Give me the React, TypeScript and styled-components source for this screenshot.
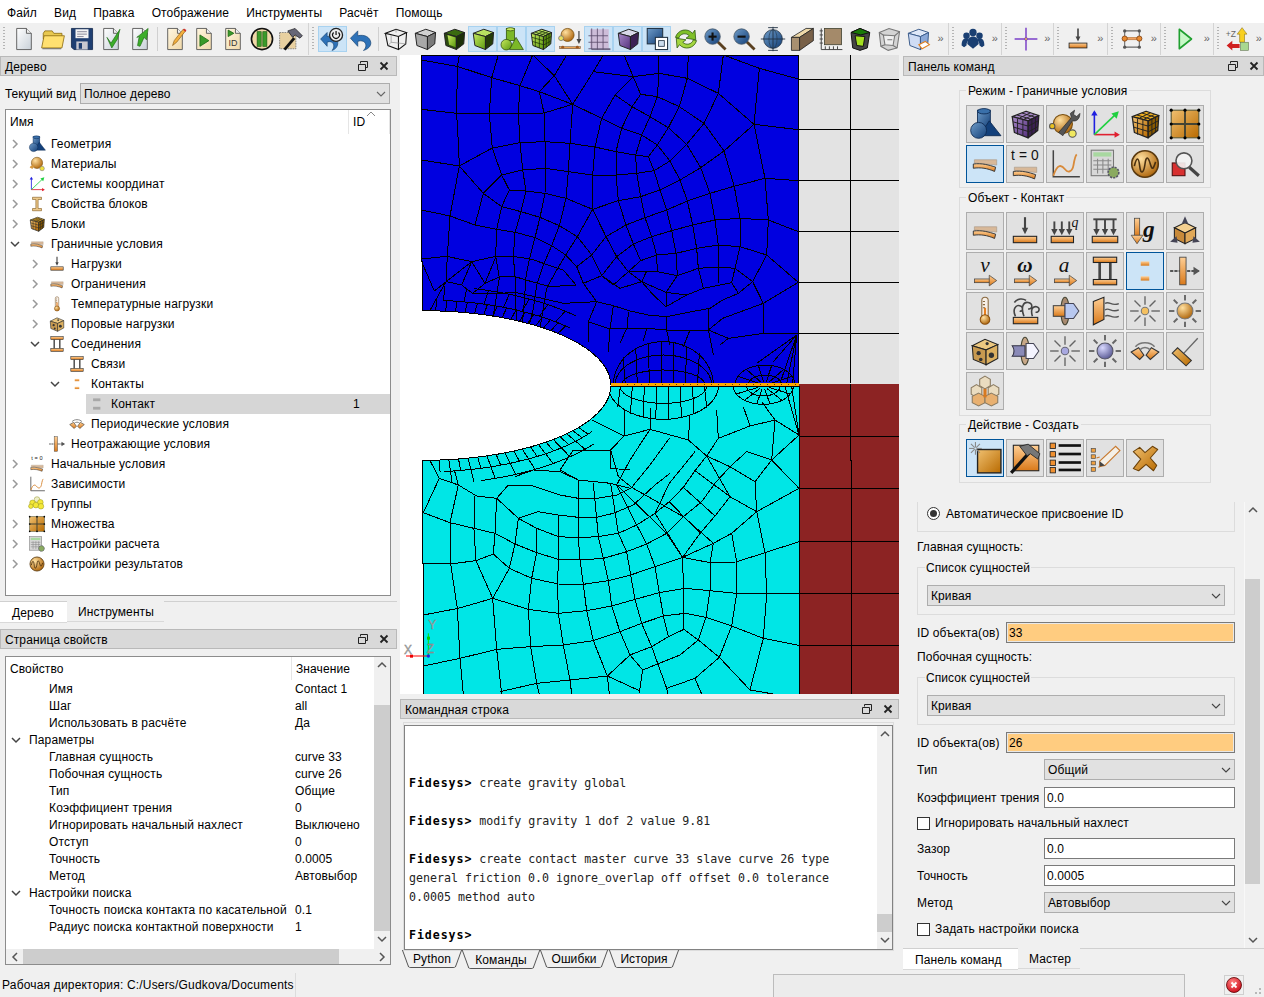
import React from 'react';
import styled, { createGlobalStyle } from 'styled-components';

const GlobalStyle = createGlobalStyle`
  html, body { margin: 0; padding: 0; }
  body { width: 1264px; height: 997px; overflow: hidden; background: #f0f0f0; color: #000;
    font: 12px/14px "Liberation Sans", Arial, sans-serif; letter-spacing: .1px; }
  * { box-sizing: border-box; }
`;

/* ---------- icon primitives ---------- */
const Defs = styled.svg`position: absolute; width: 0; height: 0;`;
const GradDefs = () => (
  <Defs>
    <defs>
      <linearGradient id="or" x1="0" y1="0" x2="0" y2="1"><stop offset="0" stopColor="#ffcf95" /><stop offset="1" stopColor="#d9791a" /></linearGradient>
      <linearGradient id="orb" x1="0" y1="0" x2="1" y2="1"><stop offset="0" stopColor="#f0c070" /><stop offset="1" stopColor="#b86a00" /></linearGradient>
      <linearGradient id="bl" x1="0" y1="0" x2="1" y2="1"><stop offset="0" stopColor="#6f9cc8" /><stop offset="1" stopColor="#133f78" /></linearGradient>
      <linearGradient id="gr" x1="0" y1="0" x2="1" y2="1"><stop offset="0" stopColor="#c8ea60" /><stop offset="1" stopColor="#5c9a10" /></linearGradient>
      <linearGradient id="pu" x1="0" y1="0" x2="1" y2="1"><stop offset="0" stopColor="#a88ac8" /><stop offset="1" stopColor="#54307c" /></linearGradient>
      <linearGradient id="doc" x1="0" y1="0" x2="1" y2="1"><stop offset="0" stopColor="#ffffff" /><stop offset="1" stopColor="#c8d0d8" /></linearGradient>
      <linearGradient id="tan" x1="0" y1="0" x2="1" y2="1"><stop offset="0" stopColor="#fff6e0" /><stop offset="1" stopColor="#f0d8a8" /></linearGradient>
      <radialGradient id="ball" cx=".35" cy=".3" r=".8"><stop offset="0" stopColor="#ffe0a0" /><stop offset="1" stopColor="#a85c00" /></radialGradient>
      <radialGradient id="ballb" cx=".35" cy=".3" r=".8"><stop offset="0" stopColor="#d8d8ff" /><stop offset="1" stopColor="#50508c" /></radialGradient>
      <radialGradient id="red" cx=".4" cy=".3" r=".8"><stop offset="0" stopColor="#ff8080" /><stop offset="1" stopColor="#c80010" /></radialGradient>
    </defs>
  </Defs>
);

const Cube = ({ t, l, r, s = '#222', grid, g = '#222' }: { t: string; l: string; r: string; s?: string; grid?: boolean; g?: string }) => (
  <g stroke={s} strokeWidth="1.2" strokeLinejoin="round">
    <polygon points="4,9 17,4 29,8 19,13" fill={t} />
    <polygon points="4,9 19,13 19,29 6,24" fill={l} />
    <polygon points="19,13 29,8 28,22 19,29" fill={r} />
    {grid && (
      <g stroke={g} strokeWidth=".9" fill="none">
        <path d="M9 11v15M14 12v15M5 14l14 4M5.500 19l13.500 4M22.500 11v15.500M25.800 9.500v14.500M19 18l9.500-5M19 23.500l9-5" />
        <path d="M8.500 7.500l14 4.300M13 5.600l13 4.200M21 5.500L11 10.300M25 7L15 11.500" />
      </g>
    )}
  </g>
);
const Doc = ({ fill = 'url(#doc)' }: { fill?: string }) => (
  <g stroke="#555" strokeWidth="1.1">
    <path d="M7 3h12l6 6v20H7z" fill={fill} />
    <path d="M19 3v6h6" fill="#eee" />
  </g>
);
const Slab = ({ dy = 0, dx = 0 }: { dy?: number; dx?: number }) => (
  <g transform={`translate(${dx},${dy})`}>
    <polygon points="6,12 27,12 27,17 6,15" fill="#d8b898" stroke="#a89888" strokeWidth=".6" />
    <path d="M5 16c8-1 15 1 21 3l-1 4c-7-3-13-4-20-3z" fill="url(#or)" stroke="#333" strokeWidth=".9" />
  </g>
);
const Plate = ({ y = 22, x = 7, w = 18, h = 5 }: { y?: number; x?: number; w?: number; h?: number }) => (
  <rect x={x} y={y} width={w} height={h} fill="url(#or)" stroke="#222" strokeWidth="1" />
);
const Down = ({ x = 16, y0 = 5, y1 = 21, w = 1.8, c = '#444' }: { x?: number; y0?: number; y1?: number; w?: number; c?: string }) => (
  <g>
    <line x1={x} y1={y0} x2={x} y2={y1 - 4} stroke={c} strokeWidth={w} />
    <polygon points={`${x - 3},${y1 - 6} ${x + 3},${y1 - 6} ${x},${y1}`} fill={c} />
  </g>
);
const RightArrow = ({ y = 25 }: { y?: number }) => (
  <g>
    <rect x="6" y={y - 1.5} width="15" height="3.500" fill="url(#or)" stroke="#444" strokeWidth=".7" />
    <polygon points={`20,${y - 5} 27,${y} 20,${y + 5}`} fill="url(#or)" stroke="#444" strokeWidth=".7" />
  </g>
);
const Rays = ({ cx = 16, cy = 16, r0 = 8, r1 = 14, c = '#666', n = 8, w = 1.3 }: { cx?: number; cy?: number; r0?: number; r1?: number; c?: string; n?: number; w?: number }) => (
  <g stroke={c} strokeWidth={w}>
    {Array.from({ length: n }).map((_, i) => {
      const a = (i * 2 * Math.PI) / n;
      return <line key={i} x1={cx + r0 * Math.cos(a)} y1={cy + r0 * Math.sin(a)} x2={cx + r1 * Math.cos(a)} y2={cy + r1 * Math.sin(a)} />;
    })}
  </g>
);
const Italic = styled.text<{ $size?: number; $bold?: boolean }>`
  font: italic ${p => (p.$bold === false ? 'normal' : 'bold')} ${p => p.$size ?? 13}px "Liberation Serif", serif; letter-spacing: 0;
`;
const Mag = ({ cx = 13, cy = 13, sign = '+' }: { cx?: number; cy?: number; sign?: string }) => (
  <g>
    <line x1={cx + 6} y1={cy + 6} x2="29" y2="29" stroke="#5a4020" strokeWidth="3.500" />
    <circle cx={cx} cy={cy} r="9.500" fill="url(#bl)" stroke="#456" strokeWidth="1" />
    <rect x={cx - 5} y={cy - 1.2} width="10" height="2.600" fill="#111" />
    {sign === '+' && <rect x={cx - 1.300} y={cy - 5} width="2.600" height="10" fill="#111" />}
  </g>
);

const icons: Record<string, React.ReactNode> = {
  newDoc: <Doc />,
  folder: (
    <g stroke="#8a6a10" strokeWidth="1">
      <path d="M4 9l2-3h9l2 3h10v7H4z" fill="#e8c850" />
      <path d="M2 27l3-15h25l-3 15z" fill="#ffe070" />
      <path d="M3 28h23" stroke="#555" />
    </g>
  ),
  save: (
    <g>
      <path d="M3 3h26v26H6l-3-3z" fill="#1f3f72" stroke="#12284c" />
      <rect x="8" y="4" width="16" height="11" fill="#f4f4f4" />
      <path d="M10 7h12M10 10h12M10 13h8" stroke="#889" strokeWidth="1.200" />
      <rect x="9" y="19" width="14" height="10" fill="#c8c8d0" />
      <rect x="12" y="21" width="4" height="7" fill="#1f3f72" />
    </g>
  ),
  docCheck: (
    <g>
      <Doc />
      <path d="M11 14l5 7 11-17-3 12-7 11z" fill="#3cae2a" stroke="#1c6a12" strokeWidth=".8" />
    </g>
  ),
  docArrow: (
    <g>
      <Doc />
      <path d="M13 24l2-11-3 1 14-11-2 14-3-3-5 11z" fill="#3cae2a" stroke="#1c6a12" strokeWidth=".8" />
    </g>
  ),
  note: (
    <g>
      <Doc fill="url(#tan)" />
      <path d="M13 24l2-6L26 4l3 2-11 14z" fill="#f4b040" stroke="#8a5a10" strokeWidth=".8" />
      <path d="M27 3l3 2-1 2-3-2z" fill="#d03030" />
    </g>
  ),
  docPlay: (
    <g>
      <Doc fill="url(#tan)" />
      <polygon points="11,11 22,18 11,25" fill="#3a9a2a" stroke="#1c6a12" />
    </g>
  ),
  docId: (
    <g>
      <Doc fill="url(#tan)" />
      <polygon points="10,5 17,9 10,13" fill="#3a9a2a" stroke="#1c6a12" />
      <text x="16" y="25" textAnchor="middle" fontSize="11" fontFamily="Liberation Sans" fill="#333">ID</text>
    </g>
  ),
  pauseCircle: (
    <g>
      <circle cx="16" cy="16" r="13" fill="#f0d8a8" stroke="#111" strokeWidth="2" />
      <rect x="10" y="7" width="5" height="18" fill="#3a9a2a" stroke="#1a5a10" strokeWidth=".8" />
      <rect x="17" y="7" width="5" height="18" fill="#3a9a2a" stroke="#1a5a10" strokeWidth=".8" />
    </g>
  ),
  hammerDoc: (
    <g>
      <path d="M2 8h20v20H2z" fill="#e8d0a0" stroke="#777" strokeDasharray="2 1" />
      <path d="M8 29l12-14" stroke="#111" strokeWidth="3.500" />
      <path d="M12 6l9-3 9 9-3 3-6-4-3 3z" fill="#667" stroke="#111" strokeWidth=".8" />
    </g>
  ),
  powerUndo: (
    <g>
      <path d="M2 16L10 8v5c7-2 12 0 13 7 .7 5-3 9-7 10 3-3 3-8 0-10-2-1-4-1-6 0v5z" fill="#2e72b8" stroke="#13406e" strokeWidth=".8" />
      <circle cx="21" cy="11" r="8" fill="#ececec" stroke="#222" strokeWidth="1.600" />
      <path d="M21 6v5M18 8a4.200 4.200 0 1 0 6 0" fill="none" stroke="#111" strokeWidth="1.500" />
    </g>
  ),
  undo: <path d="M3 15L12 6v6c9-2 15 2 16 8 .7 5-4 9-9 10 4-3 4-9 0-11-2-1-5-1-7 0v6z" fill="#2e72b8" stroke="#13406e" strokeWidth=".8" />,
  cubeWire: (
    <g fill="none" stroke="#111" strokeWidth="1.300">
      <path d="M3 9l13-5 13 4-10 5zM3 9l3 15 13 5V13M29 8l-1 14-9 7" />
      <path d="M16 4v4M10 20l-4 4M10 20l18 2M10 11v9" stroke="#888" strokeWidth=".8" />
    </g>
  ),
  cubeGray: <Cube t="#d0d0d0" l="#a8a8a8" r="#7a7a7a" />,
  cubeGreen: (
    <g>
      <Cube t="#3a6a10" l="#2c4a10" r="#1c3008" />
      <polygon points="8,11 18,14 18,26 10,23" fill="url(#gr)" />
    </g>
  ),
  cubeGreen2: <Cube t="#b8e060" l="url(#gr)" r="#243c08" />,
  shapesGreen: (
    <g stroke="#2c4a08" strokeWidth=".9">
      <rect x="9" y="3" width="10" height="15" fill="#7cb828" />
      <ellipse cx="14" cy="4" rx="5" ry="2" fill="#c8ea60" />
      <circle cx="9" cy="23" r="6.500" fill="url(#gr)" />
      <polygon points="21,14 30,29 13,29" fill="#7cb828" />
    </g>
  ),
  meshGreen: <Cube t="#b8e060" l="url(#gr)" r="#5a8a10" grid g="#1a3008" />,
  material: (
    <g>
      <circle cx="13" cy="11" r="8" fill="url(#ball)" stroke="#7a5010" />
      <circle cx="5" cy="15" r="3" fill="#e8e060" stroke="#777" />
      <Down x={27} y0={6} y1={22} w={1.5} />
      <rect x="3" y="25" width="26" height="3" fill="url(#or)" stroke="#555" strokeWidth=".6" />
      <circle cx="7" cy="26" r="1.800" fill="#a05a20" />
      <circle cx="25" cy="26" r="1.800" fill="#a05a20" />
    </g>
  ),
  gridPurple: (
    <g stroke="#5a4a6a" strokeWidth="1" fill="none">
      <rect x="5" y="4" width="23" height="24" fill="#cdbcd8" stroke="none" />
      <path d="M7 3v26h23M14 3v26M21 3v26M3 12h24M3 20h24M3 28h27" />
    </g>
  ),
  cubePurple: <Cube t="#d8d8e8" l="url(#pu)" r="#3c2054" />,
  overlap: (
    <g stroke="#234" strokeWidth="1.300">
      <rect x="4" y="3" width="19" height="19" fill="url(#bl)" />
      <rect x="14" y="14" width="15" height="15" fill="#fff" />
      <rect x="18" y="18" width="7" height="7" fill="#cde" strokeWidth="1" />
    </g>
  ),
  refresh: (
    <g stroke="#245008" strokeWidth=".9">
      <path d="M3 14C6 4 18 2 24 9l3-4 1 12-12-2 4-3c-4-4-11-3-13 3z" fill="#7fc028" />
      <path d="M29 18c-3 10-15 12-21 5l-3 4-1-12 12 2-4 3c4 4 11 3 13-3z" fill="#a4d640" />
    </g>
  ),
  zoomIn: <Mag />,
  zoomOut: <Mag sign="-" />,
  globe: (
    <g>
      <circle cx="16" cy="16" r="11.500" fill="url(#bl)" stroke="#234" />
      <path d="M1 16h30M16 1v30M10 2h12M10 30h12" stroke="#234" strokeWidth="1.100" />
      <ellipse cx="16" cy="16" rx="5" ry="11.500" fill="none" stroke="#234" strokeWidth=".7" />
    </g>
  ),
  boxBrown: (
    <g stroke="#222" strokeWidth="1">
      <polygon points="3,14 21,3 30,3 13,14" fill="#eed8a8" />
      <polygon points="3,14 13,14 13,30 3,30" fill="#a89070" />
      <polygon points="13,14 30,3 30,18 13,30" fill="#786048" />
    </g>
  ),
  ruler: (
    <g>
      <rect x="8" y="3" width="21" height="20" fill="#a48a6a" stroke="#443" />
      <path d="M4 3v26h26M2 6h4M2 11h4M2 16h4M2 21h4M9 29v-4M14 29v-4M19 29v-4M24 29v-4" stroke="#444" strokeWidth="1.200" fill="none" />
    </g>
  ),
  boxGreen: (
    <g stroke="#111" strokeWidth="1.200">
      <polygon points="5,8 16,3 28,8 25,27 16,30 7,27" fill="#444" />
      <polygon points="5,8 16,3 28,8 17,11" fill="#1a7a08" />
      <polygon points="10,12 22,13 20,25 12,24" fill="#a4e020" />
    </g>
  ),
  boxGray: (
    <g stroke="#777" strokeWidth="1.300" fill="#d4d4d4">
      <polygon points="4,8 16,3 29,7 26,27 15,30 6,25" />
      <polygon points="9,11 23,12 21,24 11,23" fill="#efefef" />
      <path d="M11 23l-5 2M21 24l5 3M9 11L4 8M23 12l6-5M14 17h6" fill="none" />
    </g>
  ),
  cubeBlue: (
    <g>
      <Cube t="#dfe8f8" l="#cfdcf4" r="#8aa8d8" s="#3a5a8a" />
      <path d="M17 23l8-4 5 4-9 5z" fill="#fff" stroke="#e08020" strokeWidth="1.300" />
    </g>
  ),
  group: (
    <g fill="#1a3f72">
      <circle cx="16" cy="8" r="4.500" />
      <circle cx="8" cy="12" r="4" />
      <circle cx="24" cy="12" r="4" />
      <path d="M9 22c0-6 3-9 7-9s7 3 7 9l-7 6z" />
      <path d="M2 24c0-6 2-9 6-9 1 0 2 0 3 1-1 2-3 4-3 8l-3 2zM30 24c0-6-2-9-6-9-1 0-2 0-3 1 1 2 3 4 3 8l3 2z" />
    </g>
  ),
  cross: (
    <g>
      <path d="M16 2v28M2 16h28" stroke="#7a3fc8" strokeWidth="1.800" />
      <circle cx="16" cy="16" r="1.800" fill="#f0c040" stroke="#7a3fc8" />
    </g>
  ),
  arrowPlate: (
    <g>
      <Down y0={3} y1={19} w={2} />
      <Plate y={21} x={5} w={22} h={6} />
    </g>
  ),
  nodes: (
    <g>
      <path d="M7 6h18v20H7z" fill="none" stroke="#666" strokeWidth="1.300" />
      <rect x="7" y="14" width="18" height="3" fill="#f0a060" stroke="#a06020" strokeWidth=".6" />
      <circle cx="7" cy="15.500" r="3.200" fill="#e88a30" stroke="#804010" />
      <circle cx="25" cy="15.500" r="3.200" fill="#e88a30" stroke="#804010" />
      <circle cx="7" cy="6" r="2" fill="#555" />
      <circle cx="25" cy="6" r="2" fill="#555" />
      <circle cx="7" cy="26" r="2" fill="#555" />
      <circle cx="25" cy="26" r="2" fill="#555" />
    </g>
  ),
  playGreen: <polygon points="9,4 24,16 9,28" fill="#c8f8c8" stroke="#20a030" strokeWidth="2" strokeLinejoin="round" />,
  axesZ: (
    <g>
      <text x="1" y="14" fontSize="10.500" fontFamily="Liberation Sans" fill="#666">+Z</text>
      <polygon points="21,2 27,10 24,10 24,20 18,20 18,10 15,10" fill="#f8d020" stroke="#8a7010" strokeWidth=".7" />
      <polygon points="2,24 9,18 9,22 18,22 18,27 9,27 9,30" fill="#d02020" />
      <rect x="19" y="20" width="10" height="10" fill="#a8d890" stroke="#607050" strokeWidth=".7" />
    </g>
  ),
  /* panel and tree icons */
  geometry: (
    <g stroke="#0c2850" strokeWidth=".8">
      <rect x="9" y="3" width="12" height="17" fill="url(#bl)" />
      <ellipse cx="15" cy="4" rx="6" ry="2.500" fill="#3a70aa" />
      <polygon points="20,13 31,27 11,27" fill="#13407a" />
      <circle cx="10" cy="22" r="7.500" fill="url(#bl)" />
    </g>
  ),
  meshPurple: <Cube t="#a88ac8" l="url(#pu)" r="#3c2054" grid />,
  materialWrench: (
    <g>
      <circle cx="14" cy="16" r="9" fill="url(#ball)" stroke="#7a5010" />
      <circle cx="4" cy="18" r="2.500" fill="#e8c020" stroke="#555" />
      <circle cx="23" cy="25" r="3.500" fill="#f0e860" stroke="#555" />
      <path d="M10 24L22 10l-1-4 4-3-1 4 3 2 3-3c0 5-3 8-7 7L14 27z" fill="#555" stroke="#222" strokeWidth=".6" />
    </g>
  ),
  coords: (
    <g fill="none" strokeWidth="1.500">
      <path d="M6 26V5" stroke="#2020e0" /><path d="M3 8l3-5 3 5z" fill="#2020e0" stroke="none" />
      <path d="M6 26h22" stroke="#e02030" /><path d="M25 23l5 3-5 3z" fill="#e02030" stroke="none" />
      <path d="M6 26L26 7" stroke="#20d040" /><path d="M22 6l7-2-2 7z" fill="#20d040" stroke="none" />
    </g>
  ),
  block: <Cube t="#f0b020" l="url(#orb)" r="#8a5a00" grid />,
  setGrid: (
    <g>
      <rect x="3" y="3" width="26" height="26" fill="url(#orb)" stroke="#553" />
      <path d="M16 3v26M3 16h26" stroke="#443" strokeWidth="1.800" />
      <circle cx="3" cy="3" r="1.500" /><circle cx="29" cy="3" r="1.500" /><circle cx="3" cy="29" r="1.500" /><circle cx="29" cy="29" r="1.500" />
      <circle cx="3" cy="16" r="1.500" /><circle cx="29" cy="16" r="1.500" /><circle cx="16" cy="3" r="1.500" /><circle cx="16" cy="29" r="1.500" />
    </g>
  ),
  slab: <Slab />,
  tZero: (
    <g>
      <text x="16" y="12" textAnchor="middle" fontSize="13" fontFamily="Liberation Sans" fill="#111">t = 0</text>
      <Slab dy={7} />
    </g>
  ),
  chart: (
    <g fill="none">
      <path d="M5 3v25h25" stroke="#444" strokeWidth="1.400" />
      <path d="M5 27c4-12 8-10 11-6s7 2 8-4 2-9 3-10" stroke="#d88a3a" strokeWidth="1.700" />
    </g>
  ),
  calc: (
    <g>
      <rect x="3" y="3" width="21" height="24" fill="#d8d8d8" stroke="#777" />
      <rect x="5" y="5" width="17" height="4" fill="#a8d8a0" />
      <path d="M5 13h17M5 17h17M5 21h17M9 11v14M14 11v14M19 11v14" stroke="#888" />
      <circle cx="24" cy="24" r="5" fill="#8aaa60" stroke="#556" strokeDasharray="2 1" strokeWidth="1.500" />
    </g>
  ),
  wave: (
    <g>
      <circle cx="16" cy="16" r="12.500" fill="url(#ball)" stroke="#5a3a10" strokeWidth="1.500" />
      <path d="M6 18c2-9 4-9 5 0s4 6 5-2 3-7 5 0 3 4 5-2" fill="none" stroke="#4a3010" strokeWidth="1.500" />
    </g>
  ),
  search: (
    <g>
      <rect x="4" y="15" width="12" height="12" fill="#d83030" stroke="#501010" />
      <line x1="20" y1="19" x2="29" y2="27" stroke="#444" strokeWidth="3" />
      <circle cx="15" cy="13" r="7.500" fill="#f4f4f4" fillOpacity=".9" stroke="#555" strokeWidth="1.500" />
    </g>
  ),
  arrows3q: (
    <g>
      <Down x={6} y0={7} y1={20} /><Down x={13} y0={7} y1={20} /><Down x={20} y0={7} y1={20} />
      <Plate y={21} x={3} w={21} h={6} />
      <Italic x="22" y="12" $size={13} $bold={false} fill="#111">q</Italic>
    </g>
  ),
  press: (
    <g>
      <path d="M5 5h22" stroke="#444" strokeWidth="1.800" />
      <Down x={8} y0={5} y1={20} /><Down x={16} y0={5} y1={20} /><Down x={24} y0={5} y1={20} />
      <Plate y={21} x={4} w={24} h={6} />
    </g>
  ),
  gravity: (
    <g>
      <rect x="6" y="4" width="5" height="17" fill="url(#or)" stroke="#444" strokeWidth=".7" />
      <polygon points="3,20 14,20 8.500,28" fill="url(#or)" stroke="#444" strokeWidth=".7" />
      <Italic x="14" y="22" $size={22} fill="#111">g</Italic>
    </g>
  ),
  cubeForces: (
    <g>
      <polygon points="16,8 26,13 16,18 6,13" fill="#f4d090" stroke="#222" />
      <polygon points="6,13 16,18 16,28 6,23" fill="#c88a3a" stroke="#222" />
      <polygon points="26,13 16,18 16,28 26,23" fill="#e0a858" stroke="#222" />
      <polygon points="16,2 19,9 13,9" fill="#445" />
      <polygon points="2,26 8,21 9,27" fill="#445" />
      <polygon points="30,26 24,21 23,27" fill="#445" />
    </g>
  ),
  velocity: (<g><Italic x="16" y="17" textAnchor="middle" $size={20} $bold={false} fill="#111">ν</Italic><RightArrow /></g>),
  omega: (<g><Italic x="16" y="17" textAnchor="middle" $size={20} fill="#111">ω</Italic><RightArrow /></g>),
  accel: (<g><Italic x="15" y="17" textAnchor="middle" $size={20} $bold={false} fill="#111">a</Italic><RightArrow /></g>),
  column: (
    <g>
      <path d="M11 8v16M21 8v16" stroke="#444" strokeWidth="2.500" />
      <Plate y={3} x={5} w={22} h={5} /><Plate y={24} x={5} w={22} h={5} />
    </g>
  ),
  contact: (
    <g>
      <rect x="12" y="7" width="8" height="4" fill="url(#or)" />
      <rect x="12" y="21" width="8" height="4" fill="url(#or)" />
    </g>
  ),
  contactGray: (
    <g>
      <rect x="9" y="6" width="13" height="5" fill="#a8a8a8" />
      <rect x="9" y="21" width="13" height="5" fill="#a8a8a8" />
    </g>
  ),
  nonreflect: (
    <g>
      <path d="M2 16h28" stroke="#555" strokeWidth="1.800" strokeDasharray="3 1" />
      <polygon points="24,12 30,16 24,20" fill="#555" />
      <rect x="11" y="3" width="6" height="26" fill="url(#or)" stroke="#444" strokeWidth=".8" />
    </g>
  ),
  thermo: (
    <g>
      <rect x="13" y="3" width="6" height="20" rx="3" fill="#f8f0e8" stroke="#8a6a40" />
      <rect x="15" y="13" width="2" height="10" fill="#e88020" />
      <path d="M14 7h2M14 10h2M14 13h2" stroke="#8a6a40" />
      <circle cx="16" cy="24" r="4.500" fill="url(#ball)" stroke="#8a5010" />
    </g>
  ),
  swirl: (
    <g>
      <Plate y={22} x={5} w={23} h={6} />
      <path d="M7 21c-3-6 0-11 4-10s3 6 0 5M15 21c-3-8-1-14 4-13s4 7 0 6M23 21c-2-6 0-10 4-9s2 6-1 5M6 8c3-4 8-4 11-2" fill="none" stroke="#444" strokeWidth="1.500" />
    </g>
  ),
  heatArrow: (
    <g>
      <ellipse cx="16" cy="16" rx="4" ry="13" fill="#a88a70" stroke="#443" />
      <rect x="5" y="11" width="11" height="10" fill="url(#or)" stroke="#444" />
      <polygon points="16,9 24,9 29,16 24,23 16,23" fill="#b8c8f0" stroke="#445" />
    </g>
  ),
  wall: (
    <g>
      <polygon points="5,7 15,3 15,24 5,29" fill="url(#or)" stroke="#222" />
      <path d="M16 9c4-3 6 3 13 0M16 15c4-3 6 3 13 0M16 21c4-3 6 3 13 0" fill="none" stroke="#555" strokeWidth="1.300" />
    </g>
  ),
  starOr: (<g><Rays r0={6} /><circle cx="16" cy="16" r="3.500" fill="#f4c060" stroke="#777" /></g>),
  sunOr: (<g><Rays r0={10} r1={15} w={1.800} /><circle cx="16" cy="16" r="7.500" fill="url(#ball)" stroke="#777" /></g>),
  porous: (
    <g>
      <polygon points="4,11 16,5 28,10 17,15" fill="#ecc880" stroke="#222" />
      <polygon points="4,11 17,15 17,29 5,24" fill="#c89a50" stroke="#222" />
      <polygon points="28,10 17,15 17,29 28,23" fill="#dcb060" stroke="#222" />
      <circle cx="10" cy="18" r="2" fill="#333" /><circle cx="22" cy="20" r="2.500" fill="#333" /><circle cx="12" cy="24" r="1.700" fill="#333" /><circle cx="18" cy="9" r="1.500" fill="#333" />
    </g>
  ),
  flowArrow: (
    <g>
      <ellipse cx="16" cy="16" rx="4" ry="13" fill="#c8a888" stroke="#443" />
      <path d="M4 11h12v10H4c2-3 2-7 0-10z" fill="#8a8ab8" stroke="#334" />
      <polygon points="17,9 24,9 29,16 24,23 17,23" fill="#f4f4ff" stroke="#445" />
    </g>
  ),
  starBl: (<g><Rays r0={6} /><circle cx="16" cy="16" r="3.500" fill="#a8a8e0" stroke="#667" /></g>),
  sunBl: (<g><Rays r0={10} r1={15} w={1.800} /><circle cx="16" cy="16" r="7.500" fill="url(#ballb)" stroke="#556" /></g>),
  periodic: (
    <g>
      <polygon points="3,17 10,13 15,20 11,24" fill="url(#or)" stroke="#333" />
      <polygon points="29,17 22,13 17,20 21,24" fill="url(#or)" stroke="#333" />
      <path d="M7 12c4-5 14-5 18 0M11 15c3-3 7-3 10 0" fill="none" stroke="#777" strokeWidth="1.500" />
    </g>
  ),
  broom: (
    <g>
      <line x1="15" y1="18" x2="28" y2="4" stroke="#666" strokeWidth="1.300" />
      <polygon points="4,18 9,13 22,25 17,30" fill="url(#orb)" stroke="#333" />
    </g>
  ),
  cubes: (
    <g stroke="#8a7a60" strokeWidth="1" fill="#eadcc0">
      <polygon points="16,2 21,5 21,11 16,14 11,11 11,5" />
      <polygon points="8,10 13,13 13,19 8,22 3,19 3,13" />
      <polygon points="24,10 29,13 29,19 24,22 19,19 19,13" />
      <polygon points="10,18 16,21 16,27 10,30 4,27 4,21" fill="#e8b070" />
      <polygon points="22,18 28,21 28,27 22,30 16,27 16,21" fill="#e8b070" />
      <rect x="14.500" y="14" width="3" height="8" fill="#d87a20" stroke="none" />
    </g>
  ),
  create: (
    <g>
      <rect x="9" y="8" width="22" height="22" fill="url(#orb)" stroke="#222" strokeWidth="1.300" />
      <Rays cx={7} cy={7} r0={1} r1={6} c="#888" w={1} />
    </g>
  ),
  hammer: (
    <g>
      <rect x="5" y="4" width="24" height="24" fill="url(#or)" stroke="#222" />
      <path d="M3 30l17-19" stroke="#111" strokeWidth="3" />
      <path d="M11 5l8-2 11 9-2 5-7-5-3 2z" fill="#777" stroke="#222" strokeWidth=".8" />
    </g>
  ),
  list: (
    <g>
      {[4, 12, 20, 27].map(y => (
        <React.Fragment key={y}>
          <rect x="2" y={y - 2} width="5" height="5" fill="#f09030" stroke="#222" strokeWidth=".8" />
          <rect x="10" y={y - 1} width="21" height="2.500" fill="#111" />
        </React.Fragment>
      ))}
    </g>
  ),
  editList: (
    <g>
      {[7, 13, 19, 25].map(y => <rect key={y} x="3" y={y} width="4" height="3.500" fill="#f0a040" stroke="#444" strokeWidth=".6" />)}
      <path d="M11 19l15-14 4 4-14 14-5 1zM11 15l-3 1M12 22l-2 3" fill="#f4f0e8" stroke="#c87a30" strokeWidth="1.100" />
      <path d="M11 19l5 4-5 1z" fill="#444" />
    </g>
  ),
  xMark: <path d="M5 10l6-4 5 5 7-6 5 3-7 8 6 7-3 5-7-6-7 6-5-2 7-9z" fill="url(#orb)" stroke="#6a4008" strokeWidth="1" strokeLinejoin="round" />,
  section: (
    <g fill="#ecc88a" stroke="#7a5010" strokeWidth="1">
      <path d="M8 4h16v4h-6v16h6v4H8v-4h6V8H8z" />
    </g>
  ),
  balls: (
    <g stroke="#8a8a20" strokeWidth=".8" fill="#f4e838">
      <circle cx="16" cy="8" r="5" fill="#eeeec8" />
      <circle cx="8" cy="14" r="5" /><circle cx="22" cy="13" r="5" />
      <circle cx="14" cy="18" r="5" /><circle cx="5" cy="20" r="4" /><circle cx="23" cy="20" r="5" />
    </g>
  ),
  mat: (
    <g>
      <circle cx="16" cy="14" r="10" fill="url(#ball)" stroke="#7a5010" />
      <path d="M3 22c2-4 5-5 8-3l-3 6z" fill="#d89a40" />
      <circle cx="25" cy="24" r="4" fill="#f0e040" stroke="#777" />
    </g>
  ),
  tZeroSmall: (
    <g>
      <text x="16" y="9" textAnchor="middle" fontSize="10" fontFamily="Liberation Sans" fill="#222">t = 0</text>
      <Slab dy={6} />
    </g>
  ),
};

const Ico = ({ n, s = 26 }: { n: string; s?: number }) => (
  <svg width={s} height={s} viewBox="0 0 32 32">{icons[n]}</svg>
);

/* ---------- shared small glyphs ---------- */
const Chev = ({ dir, c = '#8a8a8a', w = 1.5 }: { dir: 'r' | 'd' | 'u' | 'l'; c?: string; w?: number }) => {
  const d = { r: 'M3 1l4 4-4 4', l: 'M7 1L3 5l4 4', d: 'M1 3l4 4 4-4', u: 'M1 7l4-4 4 4' }[dir];
  return <svg width="10" height="10" viewBox="0 0 10 10"><path d={d} fill="none" stroke={c} strokeWidth={w} /></svg>;
};
const DockGlyphs = () => (
  <>
    <svg width="12" height="12" viewBox="0 0 12 12"><path d="M3.500 3.500V1.500h7v6h-2M1.500 4.500h7v6h-7z" fill="none" stroke="#222" strokeWidth="1" /></svg>
    <svg width="10" height="10" viewBox="0 0 10 10"><path d="M1.500 1.500l7 7M8.500 1.500l-7 7" fill="none" stroke="#222" strokeWidth="1.800" /></svg>
  </>
);

/* ---------- page ---------- */
const Page = styled.div`width: 1264px; height: 997px; display: flex; flex-direction: column; overflow: hidden;`;
const MenuBar = styled.div`height: 23px; background: #fff; display: flex; align-items: center; padding-top: 3px; flex: none;`;
const MenuItem = styled.div`padding: 0 8.600px; &:first-child { padding-left: 7px; }`;
const Toolbar = styled.div`height: 32px; flex: none; display: flex; align-items: center; background: #f0f0f0;`;
const ToolSection = styled.div<{ $w?: number }>`
  display: flex; align-items: center; height: 100%; width: ${p => (p.$w ? `${p.$w}px` : 'auto')};
  border-right: 1px solid #d4d4d4; flex: none;
  &:last-child { border-right: 0; }
`;
const Handle = styled.div<{ $w?: number }>`
  width: ${p => p.$w ?? 8}px; height: 24px; flex: none;
  background: repeating-linear-gradient(#b4b4b4 0 1px, transparent 1px 3px) 3px 0 / 2px 100% no-repeat;
`;
const ToolBtn = styled.div<{ $on?: boolean }>`
  width: 29px; height: 26px; flex: none; display: flex; align-items: center; justify-content: center;
  background: ${p => (p.$on ? '#cce4f7' : 'transparent')};
  border: 1px solid ${p => (p.$on ? '#a8d2f0' : 'transparent')};
`;
const ToolSep = styled.div`width: 5.500px; flex: none; height: 24px; background: linear-gradient(#d0d0d0, #d0d0d0) 2px 0 / 1px 100% no-repeat;`;
const More = styled.div`flex: 1; text-align: center; color: #666; font-size: 11px; letter-spacing: -1px; padding-bottom: 2px;`;

const Main = styled.div`flex: 1; display: flex; min-height: 0;`;
const LeftCol = styled.div`width: 397px; flex: none; padding-top: 1px; display: flex; flex-direction: column;`;
const CenterCol = styled.div`width: 499px; margin-left: 3px; flex: none; display: flex; flex-direction: column;`;
const RightCol = styled.div`width: 361px; margin-left: 4px; flex: none; padding-top: 1px; display: flex; flex-direction: column;`;

const DockHeader = styled.div<{ $mt?: number; $pr?: number }>`
  height: 20px; flex: none; margin-top: ${p => p.$mt ?? 0}px; background: #d9d9d9; border: 1px solid #b9b9b9;
  display: flex; align-items: center; padding: 0 ${p => p.$pr ?? 7}px 0 4px; gap: 10px;
  span { flex: 1; padding-top: 2px; }
`;
const ViewRow = styled.div`display: flex; align-items: center; height: 21px; margin-top: 7px; padding-left: 5px; flex: none;`;
const ViewLabel = styled.div`width: 75px; letter-spacing: -.05px;`;
const Combo = styled.div<{ $w: number }>`
  width: ${p => p.$w}px; height: 21px; flex: none; background: #e1e1e1; border: 1px solid #adadad; display: flex;
  align-items: center; justify-content: space-between; padding: 1px 3px 0 3px;
`;
const TreeBox = styled.div`
  width: 386px; height: 487px; margin: 5px 0 0 5px; flex: none; background: #fff; border: 1px solid #8c8c8c; position: relative;
`;
const TreeHead = styled.div`height: 24px; display: flex;`;
const HeadName = styled.div`width: 343px; padding-left: 4px; height: 100%; line-height: 25px; border-right: 1px solid #e5e5e5;`;
const HeadId = styled.div`flex: 1; padding-left: 4px; line-height: 25px; height: 100%; border-right: 1px solid #e5e5e5; position: relative;`;
const SortMark = styled.div`position: absolute; top: -1px; left: 17px; line-height: 0;`;
const TreeRow = styled.div<{ $level: number }>`
  height: 20px; display: flex; align-items: center; padding-left: ${p => 4 + p.$level * 20}px;
`;
const ArrowSlot = styled.div`width: 10px; height: 10px; flex: none; margin-right: 8px; line-height: 0;`;
const TreeCell = styled.div<{ $sel?: boolean }>`
  flex: 1; height: 20px; display: flex; align-items: center; padding-left: 2px; margin-left: -2px; letter-spacing: .15px;
  background: ${p => (p.$sel ? '#d6d6d6' : 'transparent')};
`;
const TreeIcon = styled.div`width: 18px; height: 18px; flex: none; margin-right: 5px; line-height: 0;`;
const TreeName = styled.div`flex: 1; white-space: nowrap;`;
const TreeId = styled.div`width: 37px;`;

const TabLine = styled.div`height: 22px; margin-top: 5px; flex: none; display: flex; border-top: 1px solid #d0d0d0;`;
const DockTab = styled.div<{ $on?: boolean; $w: number; $pl: number }>`
  width: ${p => p.$w}px; padding-left: ${p => p.$pl}px; height: ${p => (p.$on ? 22 : 21)}px; margin-top: -1px;
  line-height: ${p => (p.$on ? 23 : 22)}px;
  background: ${p => (p.$on ? '#fff' : '#f0f0f0')};
  border-bottom: 1px solid #d9d9d9; border-top: ${p => (p.$on ? '1px solid #d0d0d0' : '0')}; flex: none;
`;

const PropBox = styled.div`
  width: 386px; height: 309px; margin: 7px 0 0 5px; flex: none; background: #fff; border: 1px solid #8c8c8c;
  display: grid; grid-template-columns: 368px 16px; grid-template-rows: 292px 15px;
`;
const PropMain = styled.div`overflow: hidden;`;
const PropHead = styled.div`height: 23px; display: flex; line-height: 25px;`;
const PropHeadName = styled.div`width: 286px; padding-left: 4px; border-right: 1px solid #e5e5e5; height: 23px;`;
const PropHeadVal = styled.div`padding-left: 4px;`;
const PropRow = styled.div<{ $group?: boolean }>`
  height: 17px; display: flex; align-items: center; white-space: nowrap; letter-spacing: .14px;
  padding-left: ${p => (p.$group ? 5 : 43)}px;
`;
const PropName = styled.div<{ $group?: boolean }>`width: ${p => (p.$group ? 260 : 246)}px; flex: none; padding-left: ${p => (p.$group ? 8 : 0)}px;`;
const PropVal = styled.div`letter-spacing: .1px;`;
const VBar = styled.div`background: #f0f0f0; display: flex; flex-direction: column; align-items: center;`;
const BarArrow = styled.div<{ $bottom?: boolean }>`
  height: 16px; width: 100%; display: flex; align-items: center; justify-content: center; flex: none;
  margin-top: ${p => (p.$bottom ? 'auto' : '0')};
`;
const VThumb = styled.div<{ $before: number; $h: number }>`
  width: 100%; height: ${p => p.$h}px; margin-top: ${p => p.$before}px; background: #cdcdcd; flex: none;
`;
const HBar = styled.div`background: #f0f0f0; grid-column: 1 / span 2; display: flex; align-items: center;`;
const HArrow = styled.div<{ $end?: boolean }>`width: 17px; flex: none; display: flex; justify-content: center; margin-left: ${p => (p.$end ? 'auto' : '0')};`;
const HThumb = styled.div`width: 316px; height: 100%; background: #cdcdcd; flex: none;`;

/* centre */
const Viewport = styled.div`width: 499px; height: 639px; flex: none; background: #fff; line-height: 0;`;
const CmdFrame = styled.div`width: 491px; height: 229px; margin: 3px 0 0 3px; flex: none; background: #f0f0f0; border: 1px solid #dcdcdc; padding: 2px 0 0 0;`;
const CmdBox = styled.div`width: 489px; height: 225px; background: #fff; border: 1px solid #828282; display: flex;`;
const CmdText = styled.div`flex: 1; padding: 48px 0 0 4px; font: 11.630px/19px "DejaVu Sans Mono", "Liberation Mono", monospace; letter-spacing: 0; color: #222;
  b { color: #000; letter-spacing: .92px; }`;
const CmdLine = styled.div`height: 19px; white-space: pre;`;
const CmdBar = styled.div`width: 15px; flex: none; background: #f0f0f0; display: flex; flex-direction: column;`;
const CmdTabs = styled.div`display: flex; padding-left: 8px; flex: none; height: 20px; margin-top: -1px;`;
const CmdTab = styled.div<{ $on?: boolean; $w: number; $ml: number }>`
  position: relative; width: ${p => p.$w}px; margin-left: ${p => p.$ml}px; height: ${p => (p.$on ? 19 : 18)}px; text-align: center;
  line-height: ${p => (p.$on ? 21 : 18)}px; border-bottom: 1px solid #555; border-radius: 0 0 3px 3px; z-index: ${p => (p.$on ? 2 : 1)};
  &::before, &::after { content: ''; position: absolute; top: 0; bottom: 0; width: 1px; background: #555; }
  &::before { left: -3px; transform: skewX(20deg); }
  &::after { right: -3px; transform: skewX(-20deg); }
`;

/* right */
const Group = styled.div<{ $mt: number; $h: number }>`
  position: relative; margin: ${p => p.$mt}px 0 0 56px; width: 252px; height: ${p => p.$h}px; flex: none; border: 1px solid #dcdcdc;
  padding: 14px 0 0 6px;
`;
const Legend = styled.div`position: absolute; top: -7px; left: 6px; padding: 0 2px; background: #f0f0f0; white-space: nowrap;`;
const BtnGrid = styled.div`display: grid; grid-template-columns: repeat(6, 38px); grid-auto-rows: 38px; gap: 2px;`;
const PanelBtn = styled.div<{ $on?: boolean }>`
  background: ${p => (p.$on ? '#cce4f7' : '#e1e1e1')}; border: 1px solid ${p => (p.$on ? '#005499' : '#adadad')};
  display: flex; align-items: center; justify-content: center;
`;
const FormArea = styled.div`margin-top: 19px; height: 446px; flex: none; display: flex;`;
const Form = styled.div`width: 318px; margin-left: 14px; display: flex; flex-direction: column; flex: none;`;
const ClipBox = styled.div`height: 30px; flex: none; border: 1px solid #dcdcdc; border-top: 0; padding: 5px 0 0 9px; display: flex; gap: 6px; align-items: flex-start; letter-spacing: .1px;`;
const Radio = styled.div`width: 13px; height: 13px; border: 1px solid #333; border-radius: 50%; background: #fff; display: flex; align-items: center; justify-content: center; flex: none;
  &::after { content: ''; width: 7px; height: 7px; border-radius: 50%; background: #333; }`;
const FormLabel = styled.div<{ $mt: number }>`margin-top: ${p => p.$mt}px; height: 14px; flex: none; letter-spacing: .05px;`;
const SubGroup = styled.div<{ $mt: number }>`
  margin-top: ${p => p.$mt}px; height: 48px; flex: none; border: 1px solid #dcdcdc; padding: 17px 0 0 9px; position: relative;
`;
const SubLegend = styled.div`position: absolute; top: -7px; left: 7px; padding: 0 1px; background: #f0f0f0; letter-spacing: .05px;`;
const FormRow = styled.div<{ $mt: number; $lw: number }>`
  margin-top: ${p => p.$mt}px; display: grid; grid-template-columns: ${p => p.$lw}px 1fr; align-items: center; height: 21px; flex: none;
`;
const FieldInput = styled.div<{ $orange?: boolean }>`
  height: 21px; border: 1px solid #7a7a7a; background: ${p => (p.$orange ? '#ffcc80' : '#fff')};
  padding-left: 2px; line-height: 20px;
  ${p => p.$orange && 'box-shadow: inset 0 0 0 1px #e8e8e8;'}
`;
const CheckRow = styled.div<{ $mt: number }>`margin-top: ${p => p.$mt}px; display: flex; align-items: center; gap: 5px; height: 14px; flex: none; letter-spacing: .14px;`;
const CheckBox = styled.div`width: 13px; height: 13px; border: 1px solid #333; background: #fff; flex: none;`;
const FormBar = styled.div`width: 15px; flex: none; display: flex; flex-direction: column;`;
const FormDivider = styled.div`width: 1px; margin-left: 9px; background: #f8f8f8; flex: none;`;

/* status */
const Status = styled.div`height: 24px; flex: none; display: flex; align-items: center; position: relative;`;
const StatusText = styled.div`width: 296px; padding-left: 2px; height: 100%; line-height: 24px; border-right: 1px solid #dcdcdc; flex: none; white-space: nowrap; letter-spacing: .18px;`;
const StatusProgress = styled.div`width: 412px; height: 23px; margin: 1px 0 0 477px; background: #ececec; border: 1px solid #bcbcbc; border-bottom: 0; flex: none;`;
const StatusBtn = styled.div`margin-left: 39px; width: 20px; height: 20px; flex: none; line-height: 0; border: 1px solid #cfcfcf;`;
const Grip = styled.div`position: absolute; right: 1px; bottom: 1px; width: 12px; height: 12px;
  background: radial-gradient(circle at 1px 1px, #b8b8b8 1px, transparent 1.200px) 0 0 / 4px 4px;
  clip-path: polygon(100% 0, 100% 100%, 0 100%);`;
const AxisLabel = styled.text`font: 36px "Liberation Sans", sans-serif; fill: #a8a8a8; stroke: #777; stroke-width: 1; letter-spacing: 0;`;

/* ---------- mesh data: coordinates are 3x the viewport's pixels ---------- */
const rad = (d: number) => (d * Math.PI) / 180;
const A = 564; const B = 223;
const ell = (cy: number, sign: number, d: number, t: number) =>
  `${(68 + (A + d) * Math.cos(rad(t))).toFixed(1)},${(cy + sign * (B + d) * Math.sin(rad(t))).toFixed(1)}`;
const range = (a: number, b: number, s: number) => { const o: number[] = []; for (let v = a; v <= b; v += s) o.push(v); return o; };
const ring = (cy: number, sign: number, d: number, t0: number, t1: number) => range(t0, t1, 2).map(t => ell(cy, sign, d, t)).join(' ');
const ticks = (cy: number, sign: number, d0: number, d1: number, t0: number, t1: number, s: number) =>
  range(t0, t1, s).map(t => `${ell(cy, sign, d0, t)} ${ell(cy, sign, d1, t)}`);
const fanRings = (cx: number, cy: number, sign: number, rs: [number, number][]) =>
  rs.map(([rx, ry]) => range(0, 180, 6).map(a => `${(cx + rx * Math.cos(rad(a))).toFixed(1)},${(cy + sign * ry * Math.sin(rad(a))).toFixed(1)}`).join(' '));
const fanSpokes = (cx: number, cy: number, sign: number, r0: [number, number], r1: [number, number], n: number) =>
  range(0, n, 1).map(i => {
    const a = rad((i * 180) / n);
    return `${(cx + r0[0] * Math.cos(a)).toFixed(1)},${(cy + sign * r0[1] * Math.sin(a)).toFixed(1)} ${(cx + r1[0] * Math.cos(a)).toFixed(1)},${(cy + sign * r1[1] * Math.sin(a)).toFixed(1)}`;
  });
const verticals = (cx: number, cy: number, sign: number, rx: number, ry: number, step: number) =>
  range(cx - rx + step, cx + rx - step, step).map(x => {
    const u = (x - cx) / rx;
    return `${x},${cy} ${(cx + (x - cx) * 1.06).toFixed(1)},${(cy + sign * ry * Math.sqrt(1 - u * u)).toFixed(1)}`;
  });

const upperLines: string[] = [
  '65,15 175,35 275,68 360,92 418,110 518,148 605,190 665,220 725,240 772,270 810,318 840,375 862,438 878,510 890,580 895,640 910,700',
  '65,163 170,175 270,176 355,176 432,174 518,148',
  '65,315 178,333 275,280 360,263 435,260 510,265 585,276 648,290 705,300 745,305',
  '65,465 150,483 225,510 290,523 350,533 405,548 455,572 497,600 530,635 550,685',
  '65,612 140,604 215,620 288,604 340,604 395,613 445,630 490,645 528,690',
  '178,0 172,35 170,175 176,280 178,333 150,483 142,604 138,680 90,766',
  '295,0 275,68 268,176 277,280 305,360 328,405 305,455 290,523 287,604 298,668 290,720 280,780',
  '398,0 360,92 355,176 360,263 368,345 378,408 363,470 345,533 340,604 345,665 345,712 350,795',
  '463,62 418,110 432,174 435,260 437,340 435,415 420,487 405,548 388,613 378,665 372,750 368,800',
  '518,148 510,265 505,350 498,430 478,512 455,572 430,630 410,690 400,760 388,810',
  '605,190 585,276 578,360 578,463 532,545 497,600 470,645 440,700 420,820',
  '580,50 518,148', '463,62 518,148', '398,0 463,62', '463,62 500,0', '580,50 610,0', '580,50 700,65 672,0',
  '672,0 722,118 696,155 665,220 648,290 648,360 655,437 678,510 700,567 722,617',
  '775,0 777,55 772,125 750,185 725,240 707,300 710,355 722,425 735,488 755,545 770,600 772,650',
  '865,0 862,70 838,155 805,218 772,270 745,305 762,347 780,405 800,465 815,527 828,595 832,662',
  '970,0 955,115 912,205 860,268 810,318 762,347 710,355 648,360 578,360 505,350 437,340 368,345 305,360 250,415 178,333',
  '1078,40 1062,208 972,288 902,338 840,375 780,405 722,425 655,437 578,463 498,430 435,415 378,408 328,405',
  '1062,208 1095,370 1105,495 1100,600 1058,680 1090,745 1092,835',
  '700,65 777,55 862,70 955,115 1062,208',
  '700,65 645,120 605,190',
  '645,120 696,155 750,185 805,218 860,268 902,338 930,415 945,495 955,570 955,636 955,685',
  '722,118 772,125 838,155 912,205 972,288 1003,395 1020,490 1020,575 1005,640 995,683',
  '1095,370 1005,393 930,415 862,438 800,465 735,488 678,510 618,545 575,600 530,635',
  '1105,495 1020,490 945,495 878,510 815,527 755,545 700,567 650,605 605,662 550,685',
  '1100,600 1020,575 955,570 890,580 828,595 770,600 722,617 685,650 640,690',
  '578,463 618,545 650,605 685,650 725,680 760,720 798,755',
  '532,545 575,600 605,662',
  '250,415 305,455 363,470 420,487 478,512 532,545',
  '225,510 250,415',
  '740,648 772,650 832,662 895,640 955,636 1005,640 1058,680',
  '605,662 640,690 685,650 740,648 725,680',
  '550,685 590,740 640,752 690,768 745,780 800,785 875,770 930,760 968,735 1015,715 1058,680',
  '605,662 660,700 725,680 798,712 860,720 910,700 995,683 1015,715',
  '798,755 798,712 832,662', '798,755 860,720', '800,785 800,825',
  '565,800 630,822 680,820 740,820 800,825 870,825 925,825 985,850 1090,835 1195,835',
  '925,825 968,790 1090,745 1195,682', '925,760 925,825', '630,822 640,752', '685,770 682,820', '565,800 590,740', '565,800 565,860',
  '1195,530 1105,495', '1195,377 1095,370', '1195,682 1100,600', '1195,224 1062,208', '1195,72 1078,40', '970,0 1078,40',
  '65,620 103,708 215,620 255,685 288,604', '103,708 140,680 185,690 218,715 255,685 300,665 345,665 395,680 450,695 528,690',
  '185,690 215,620', '218,715 300,715 345,712 405,725 490,745 590,740',
  '630,822 625,890', '680,820 660,865', '740,820 730,858', '800,825 810,870', '870,825 850,875', '925,825 940,900', '985,850 960,870',
  '1190,840 1120,920', '1190,840 1070,925', '1190,840 1140,985', '1190,840 1160,985', '1190,840 1178,985',
  ...ticks(990, -1, 0, 32, 44, 86, 3),
  ...ticks(990, -1, 32, 75, 48, 84, 6),
  ring(990, -1, 32, 42, 84), ring(990, -1, 75, 44, 76),
  ...fanRings(790, 990, -1, [[125, 45], [145, 90], [150, 130]]),
  ...verticals(790, 990, -1, 150, 130, 36),
  ...fanRings(1095, 990, -1, [[50, 30], [90, 60]]),
  ...fanSpokes(1095, 990, -1, [18, 10], [90, 60], 7),
];

const lowerLines: string[] = [
  '285,490 345,522 410,548 475,568 540,570 610,565 680,545 740,522 800,490 850,440 905,395 945,340 990,290 1040,245',
  '228,572 280,552 328,595 395,625 475,642 550,643 625,632 692,615 765,590 848,562 930,578 1008,576 1095,548 1197,515',
  '70,735 175,715 278,685 385,718 475,730 560,722 635,708 705,688 778,668 855,655 930,662 1010,670 1100,672 1197,670',
  '70,888 180,865 290,838 390,830 490,825 580,812 660,785 725,760 790,738 855,730 918,742 995,768 1090,805 1197,826',
  '300,965 410,940 510,930 622,918 690,855 755,830 805,800 852,778 895,810 958,862 1050,960',
  '622,918 718,962', '690,855 728,900 840,855 895,810', '728,900 718,968', '800,955 885,925 958,862', '885,925 905,972', '1050,960 1120,972',
  '70,428 150,458 285,490', '68,580 150,582 228,572',
  '118,325 175,345 230,378 290,385 355,445 410,475 475,500 535,503 595,500 655,490 710,465 765,430 808,395 850,352 885,302 920,258 955,205',
  '290,385 325,345 390,345 480,375 535,385 590,385 650,375 690,355 650,345',
  '355,445 415,425 475,435 535,442 590,442 640,430 700,405 765,345 810,310',
  '345,320 400,300 480,305 535,330 632,340 650,345',
  '70,428 118,325 90,272', '150,458 175,345 163,300',
  '150,582 150,458', '152,582 172,715 180,865 190,972',
  '225,378 222,480 228,572 278,685 290,838 305,972',
  '285,490 280,552', '328,595 278,685', '290,385 285,490',
  '355,445 345,522 328,595', '410,475 410,548 395,625 385,718 392,830 410,940 418,972',
  '475,435 475,500 475,568 473,642 475,730 490,825 510,930 515,972',
  '535,330 535,503 540,570 550,643 560,722 580,812 622,918 628,972',
  '580,340 595,500 610,565 625,632 635,708 660,785 690,855',
  '632,340 655,490 680,545 692,615 705,688 725,760 755,830 800,955 803,972',
  '650,345 710,465 740,522 765,590 778,668 790,738 805,800',
  '650,345 800,490 848,562 850,655 852,778',
  '695,352 850,440 940,520 848,562',
  '940,520 930,578 930,662 918,742 895,810',
  '940,520 995,490 1010,576 1010,670 995,768 958,862',
  '995,490 1070,425 1095,548 1100,672 1090,805 1050,960',
  '1070,425 1065,335 1115,270 1197,195', '1197,355 1070,425', '1197,355 1115,270',
  '1065,335 990,290 920,258 865,210 750,178 672,198 632,240 655,320 695,352',
  '885,302 990,380 1070,425', '850,352 945,438', '920,258 990,380 945,438 900,490 848,562',
  '808,395 900,490', '765,430 848,562', '885,245 808,340 765,430', '808,205 750,285 695,352', '750,178 690,270 650,345',
  '1115,270 1125,150 1197,195', '672,198 575,150', '632,240 520,240 480,300 535,330',
  '632,240 632,295 690,300', '955,205 1050,168 1125,150', '1040,245 1115,270',
  '865,210 870,135', '750,178 750,115', '672,198 672,120', '955,205 950,120', '1050,168 1030,110',
  '1125,150 1085,95', '1197,195 1155,50', '1197,195 1175,50',
  ...ticks(48, 1, 0, 35, 34, 86, 3),
  ...ticks(48, 1, 35, 72, 40, 82, 6),
  ring(48, 1, 35, 32, 84), ring(48, 1, 72, 36, 74),
  ...fanRings(790, 48, 1, [[130, 52], [165, 100]]),
  ...verticals(790, 48, 1, 165, 100, 36),
  ...fanRings(1090, 48, 1, [[50, 30], [90, 55]]),
  ...fanSpokes(1090, 48, 1, [18, 10], [90, 55], 7),
];

const holeTop = range(0, 90, 3).map(t => ell(990, -1, 0, t)).join(' ');
const holeBot = range(0, 90, 3).map(t => ell(48, 1, 0, t)).reverse().join(' ');
const upperShape = `65,0 1196,0 1196,987 632,987 ${holeTop} 68,767 68,620 65,620`;
const lowerShape = `632,48 1197,48 1197,972 70,972 70,580 68,580 68,271 ${holeBot}`;

const Mesh = () => (
  <svg width="499" height="639" viewBox="0 0 1497 1917" shapeRendering="crispEdges">
    <polygon points="1197,0 1497,0 1497,988 1197,988" fill="#e3e3e3" />
    <polygon points="1197,988 1497,988 1497,1917 1197,1917" fill="#8c2323" />
    <polygon points={upperShape} fill="#0000e0" stroke="#000" strokeWidth="3" />
    <g fill="none" stroke="#000" strokeWidth="3">
      {[72, 224, 377, 529, 682, 835, 1145, 1300, 1460, 1615, 1771].map(y => <polyline key={y} points={`1197,${y} 1497,${y}`} />)}
      <polyline points="1350,0 1350,310 1352,310 1352,1215 1355,1215 1355,1917" />
    </g>
    <clipPath id="upperClip"><polygon points={upperShape} /></clipPath>
    <g clipPath="url(#upperClip)" fill="none" stroke="#000" strokeWidth="3">
      {upperLines.map((p, i) => <polyline key={i} points={p} />)}
    </g>
    <g transform="translate(0,945)">
      <clipPath id="lowerClip"><polygon points={lowerShape} /></clipPath>
      <polygon points={lowerShape} fill="#00e6e6" stroke="#000" strokeWidth="3" />
      <g clipPath="url(#lowerClip)" fill="none" stroke="#000" strokeWidth="3">
        {lowerLines.map((p, i) => <polyline key={i} points={p} />)}
      </g>
    </g>
    <rect x="632" y="985" width="565" height="9" fill="#ffa800" />
    <polyline points="680,990 1195,988" stroke="#000" strokeWidth="2" strokeDasharray="3 18" />
    <rect x="1197" y="985" width="300" height="3" fill="#e3e3e3" />
    <g transform="translate(0,945)" shapeRendering="auto">
      <line x1="85" y1="858" x2="18" y2="858" stroke="#f00" strokeWidth="3" />
      <rect x="30" y="854" width="9" height="9" fill="#e00" />
      <line x1="85" y1="858" x2="85" y2="790" stroke="#00e000" strokeWidth="3" />
      <rect x="81" y="800" width="9" height="9" fill="#00d000" />
      <circle cx="85" cy="858" r="5" fill="#2020e0" />
      <AxisLabel x="12" y="852">X</AxisLabel>
      <AxisLabel x="85" y="778">Y</AxisLabel>
      <AxisLabel x="80" y="850">Z</AxisLabel>
    </g>
  </svg>
);

/* ---------- content ---------- */
const toolbarA = ['newDoc', 'folder', 'save', 'docCheck', 'docArrow'];
const toolbarB = ['note', 'docPlay', 'docId', 'pauseCircle', 'hammerDoc'];
const toolbarC: [string, boolean?][] = [['cubeWire'], ['cubeGray'], ['cubeGreen'], ['cubeGreen2', true], ['shapesGreen', true], ['meshGreen', true], ['material'], ['gridPurple', true], ['cubePurple', true], ['overlap', true], ['refresh'], ['zoomIn'], ['zoomOut'], ['globe'], ['boxBrown'], ['ruler'], ['boxGreen'], ['boxGray'], ['cubeBlue']];
const smallSections: [string, number][] = [['group', 53], ['cross', 52], ['arrowPlate', 54], ['nodes', 53], ['playGreen', 53], ['axesZ', 50]];

type TreeItem = { level: number; arrow?: 'r' | 'd'; icon: string; name: string; id?: string; sel?: boolean };
const tree: TreeItem[] = [
  { level: 0, arrow: 'r', icon: 'geometry', name: 'Геометрия' },
  { level: 0, arrow: 'r', icon: 'mat', name: 'Материалы' },
  { level: 0, arrow: 'r', icon: 'coords', name: 'Системы координат' },
  { level: 0, arrow: 'r', icon: 'section', name: 'Свойства блоков' },
  { level: 0, arrow: 'r', icon: 'block', name: 'Блоки' },
  { level: 0, arrow: 'd', icon: 'slab', name: 'Граничные условия' },
  { level: 1, arrow: 'r', icon: 'arrowPlate', name: 'Нагрузки' },
  { level: 1, arrow: 'r', icon: 'slab', name: 'Ограничения' },
  { level: 1, arrow: 'r', icon: 'thermo', name: 'Температурные нагрузки' },
  { level: 1, arrow: 'r', icon: 'porous', name: 'Поровые нагрузки' },
  { level: 1, arrow: 'd', icon: 'column', name: 'Соединения' },
  { level: 2, icon: 'column', name: 'Связи' },
  { level: 2, arrow: 'd', icon: 'contact', name: 'Контакты' },
  { level: 3, icon: 'contactGray', name: 'Контакт', id: '1', sel: true },
  { level: 2, icon: 'periodic', name: 'Периодические условия' },
  { level: 1, icon: 'nonreflect', name: 'Неотражающие условия' },
  { level: 0, arrow: 'r', icon: 'tZeroSmall', name: 'Начальные условия' },
  { level: 0, arrow: 'r', icon: 'chart', name: 'Зависимости' },
  { level: 0, icon: 'balls', name: 'Группы' },
  { level: 0, arrow: 'r', icon: 'setGrid', name: 'Множества' },
  { level: 0, arrow: 'r', icon: 'calc', name: 'Настройки расчета' },
  { level: 0, arrow: 'r', icon: 'wave', name: 'Настройки результатов' },
];

const props: [string, string?, boolean?][] = [
  ['Имя', 'Contact 1'], ['Шаг', 'all'], ['Использовать в расчёте', 'Да'],
  ['Параметры', '', true],
  ['Главная сущность', 'curve 33'], ['Побочная сущность', 'curve 26'], ['Тип', 'Общие'], ['Коэффициент трения', '0'],
  ['Игнорировать начальный нахлест', 'Выключено'], ['Отступ', '0'], ['Точность', '0.0005'], ['Метод', 'Автовыбор'],
  ['Настройки поиска', '', true],
  ['Точность поиска контакта по касательной', '0.1'], ['Радиус поиска контактной поверхности', '1'],
];

const modeBtns: [string, boolean?][] = [['geometry'], ['meshPurple'], ['materialWrench'], ['coords'], ['block'], ['setGrid'], ['slab', true], ['tZero'], ['chart'], ['calc'], ['wave'], ['search']];
const objectBtns: [string, boolean?][] = [['slab'], ['arrowPlate'], ['arrows3q'], ['press'], ['gravity'], ['cubeForces'], ['velocity'], ['omega'], ['accel'], ['column'], ['contact', true], ['nonreflect'], ['thermo'], ['swirl'], ['heatArrow'], ['wall'], ['starOr'], ['sunOr'], ['porous'], ['flowArrow'], ['starBl'], ['sunBl'], ['periodic'], ['broom'], ['cubes']];
const actionBtns: [string, boolean?][] = [['create', true], ['hammer'], ['list'], ['editList'], ['xMark']];

const Buttons = ({ items }: { items: [string, boolean?][] }) => (
  <BtnGrid>
    {items.map(([n, on], i) => <PanelBtn key={i} $on={on}><Ico n={n} s={34} /></PanelBtn>)}
  </BtnGrid>
);

export default function App() {
  return (
    <Page>
      <GlobalStyle />
      <GradDefs />
      <MenuBar>
        {['Файл', 'Вид', 'Правка', 'Отображение', 'Инструменты', 'Расчёт', 'Помощь'].map(m => <MenuItem key={m}>{m}</MenuItem>)}
      </MenuBar>
      <Toolbar>
        <ToolSection $w={309}>
          <Handle $w={9.500} />
          {toolbarA.map(n => <ToolBtn key={n}><Ico n={n} /></ToolBtn>)}
          <ToolSep />
          {toolbarB.map(n => <ToolBtn key={n}><Ico n={n} /></ToolBtn>)}
        </ToolSection>
        <ToolSection $w={640}>
          <Handle $w={8.500} />
          <ToolBtn $on><Ico n="powerUndo" /></ToolBtn>
          <ToolBtn><Ico n="undo" /></ToolBtn>
          <ToolSep />
          {toolbarC.map(([n, on]) => <ToolBtn key={n} $on={on}><Ico n={n} /></ToolBtn>)}
          <More>»</More>
        </ToolSection>
        {smallSections.map(([n, w]) => (
          <ToolSection key={n} $w={w}>
            <Handle $w={9.500} />
            <ToolBtn><Ico n={n} /></ToolBtn>
            <More>»</More>
          </ToolSection>
        ))}
      </Toolbar>
      <Main>
        <LeftCol>
          <DockHeader><span>Дерево</span><DockGlyphs /></DockHeader>
          <ViewRow>
            <ViewLabel>Текущий вид</ViewLabel>
            <Combo $w={310}>Полное дерево<Chev dir="d" c="#666" w={1.100} /></Combo>
          </ViewRow>
          <TreeBox>
            <TreeHead>
              <HeadName>Имя</HeadName>
              <HeadId>ID<SortMark><Chev dir="u" c="#888" w={1} /></SortMark></HeadId>
            </TreeHead>
            {tree.map(t => (
              <TreeRow key={t.name} $level={t.level}>
                <ArrowSlot>{t.arrow && <Chev dir={t.arrow} c={t.arrow === 'd' ? '#444' : '#999'} />}</ArrowSlot>
                <TreeCell $sel={t.sel}>
                  <TreeIcon><Ico n={t.icon} s={18} /></TreeIcon>
                  <TreeName>{t.name}</TreeName>
                  {t.id && <TreeId>{t.id}</TreeId>}
                </TreeCell>
              </TreeRow>
            ))}
          </TreeBox>
          <TabLine>
            <DockTab $on $w={67} $pl={12}>Дерево</DockTab>
            <DockTab $w={97} $pl={11}>Инструменты</DockTab>
          </TabLine>
          <DockHeader $mt={6}><span>Страница свойств</span><DockGlyphs /></DockHeader>
          <PropBox>
            <PropMain>
              <PropHead><PropHeadName>Свойство</PropHeadName><PropHeadVal>Значение</PropHeadVal></PropHead>
              {props.map(([n, v, g]) => (
                <PropRow key={n} $group={g}>
                  {g && <Chev dir="d" c="#444" />}
                  <PropName $group={g}>{n}</PropName>
                  <PropVal>{v}</PropVal>
                </PropRow>
              ))}
            </PropMain>
            <VBar>
              <BarArrow><Chev dir="u" c="#555" /></BarArrow>
              <VThumb $before={32} $h={226} />
              <BarArrow><Chev dir="d" c="#555" /></BarArrow>
            </VBar>
            <HBar>
              <HArrow><Chev dir="l" c="#555" /></HArrow>
              <HThumb />
              <HArrow $end><Chev dir="r" c="#555" /></HArrow>
            </HBar>
          </PropBox>
        </LeftCol>

        <CenterCol>
          <Viewport><Mesh /></Viewport>
          <DockHeader $mt={5} $pr={5}><span>Командная строка</span><DockGlyphs /></DockHeader>
          <CmdFrame>
            <CmdBox>
              <CmdText>
                <CmdLine><b>Fidesys&gt;</b> create gravity global</CmdLine>
                <CmdLine />
                <CmdLine><b>Fidesys&gt;</b> modify gravity 1 dof 2 value 9.81</CmdLine>
                <CmdLine />
                <CmdLine><b>Fidesys&gt;</b> create contact master curve 33 slave curve 26 type</CmdLine>
                <CmdLine>general friction 0.0 ignore_overlap off offset 0.0 tolerance</CmdLine>
                <CmdLine>0.0005 method auto</CmdLine>
                <CmdLine />
                <CmdLine><b>Fidesys&gt;</b></CmdLine>
              </CmdText>
              <CmdBar>
                <BarArrow><Chev dir="u" c="#555" /></BarArrow>
                <VThumb $before={172} $h={18} />
                <BarArrow><Chev dir="d" c="#555" /></BarArrow>
              </CmdBar>
            </CmdBox>
          </CmdFrame>
          <CmdTabs>
            <CmdTab $w={48} $ml={0}>Python</CmdTab>
            <CmdTab $on $w={66} $ml={12}>Команды</CmdTab>
            <CmdTab $w={56} $ml={12}>Ошибки</CmdTab>
            <CmdTab $w={58} $ml={13}>История</CmdTab>
          </CmdTabs>
        </CenterCol>

        <RightCol>
          <DockHeader $pr={4}><span>Панель команд</span><DockGlyphs /></DockHeader>
          <Group $mt={14} $h={98}><Legend>Режим - Граничные условия</Legend><Buttons items={modeBtns} /></Group>
          <Group $mt={9} $h={219}><Legend>Объект - Контакт</Legend><Buttons items={objectBtns} /></Group>
          <Group $mt={8} $h={59}><Legend>Действие - Создать</Legend><Buttons items={actionBtns} /></Group>
          <FormArea>
            <Form>
              <ClipBox><Radio />Автоматическое присвоение ID</ClipBox>
              <FormLabel $mt={8}>Главная сущность:</FormLabel>
              <SubGroup $mt={13}><SubLegend>Список сущностей</SubLegend><Combo $w={298}>Кривая<Chev dir="d" c="#444" w={1.100} /></Combo></SubGroup>
              <FormRow $mt={7} $lw={89}><span>ID объекта(ов)</span><FieldInput $orange>33</FieldInput></FormRow>
              <FormLabel $mt={7}>Побочная сущность:</FormLabel>
              <SubGroup $mt={13}><SubLegend>Список сущностей</SubLegend><Combo $w={298}>Кривая<Chev dir="d" c="#444" w={1.100} /></Combo></SubGroup>
              <FormRow $mt={7} $lw={89}><span>ID объекта(ов)</span><FieldInput $orange>26</FieldInput></FormRow>
              <FormRow $mt={6} $lw={127}><span>Тип</span><Combo $w={191}>Общий<Chev dir="d" c="#444" w={1.100} /></Combo></FormRow>
              <FormRow $mt={7} $lw={127}><span>Коэффициент трения</span><FieldInput>0.0</FieldInput></FormRow>
              <CheckRow $mt={8}><CheckBox />Игнорировать начальный нахлест</CheckRow>
              <FormRow $mt={8} $lw={127}><span>Зазор</span><FieldInput>0.0</FieldInput></FormRow>
              <FormRow $mt={6} $lw={127}><span>Точность</span><FieldInput>0.0005</FieldInput></FormRow>
              <FormRow $mt={6} $lw={127}><span>Метод</span><Combo $w={191}>Автовыбор<Chev dir="d" c="#444" w={1.100} /></Combo></FormRow>
              <CheckRow $mt={9}><CheckBox />Задать настройки поиска</CheckRow>
            </Form>
            <FormDivider />
            <FormBar>
              <BarArrow><Chev dir="u" c="#555" /></BarArrow>
              <VThumb $before={61} $h={305} />
              <BarArrow $bottom><Chev dir="d" c="#555" /></BarArrow>
            </FormBar>
          </FormArea>
          <TabLine style={{ marginTop: 0 }}>
            <DockTab $on $w={115} $pl={12}>Панель команд</DockTab>
            <DockTab $w={62} $pl={11}>Мастер</DockTab>
          </TabLine>
        </RightCol>
      </Main>
      <Status>
        <StatusText>Рабочая директория: C:/Users/Gudkova/Documents</StatusText>
        <StatusProgress />
        <StatusBtn>
          <svg width="18" height="18" viewBox="0 0 18 18">
            <circle cx="9" cy="9" r="7.500" fill="url(#red)" stroke="#500" strokeWidth=".8" />
            <path d="M6.500 6.500l5 5M11.500 6.500l-5 5" stroke="#fff" strokeWidth="1.800" />
          </svg>
        </StatusBtn>
        <Grip />
      </Status>
    </Page>
  );
}
